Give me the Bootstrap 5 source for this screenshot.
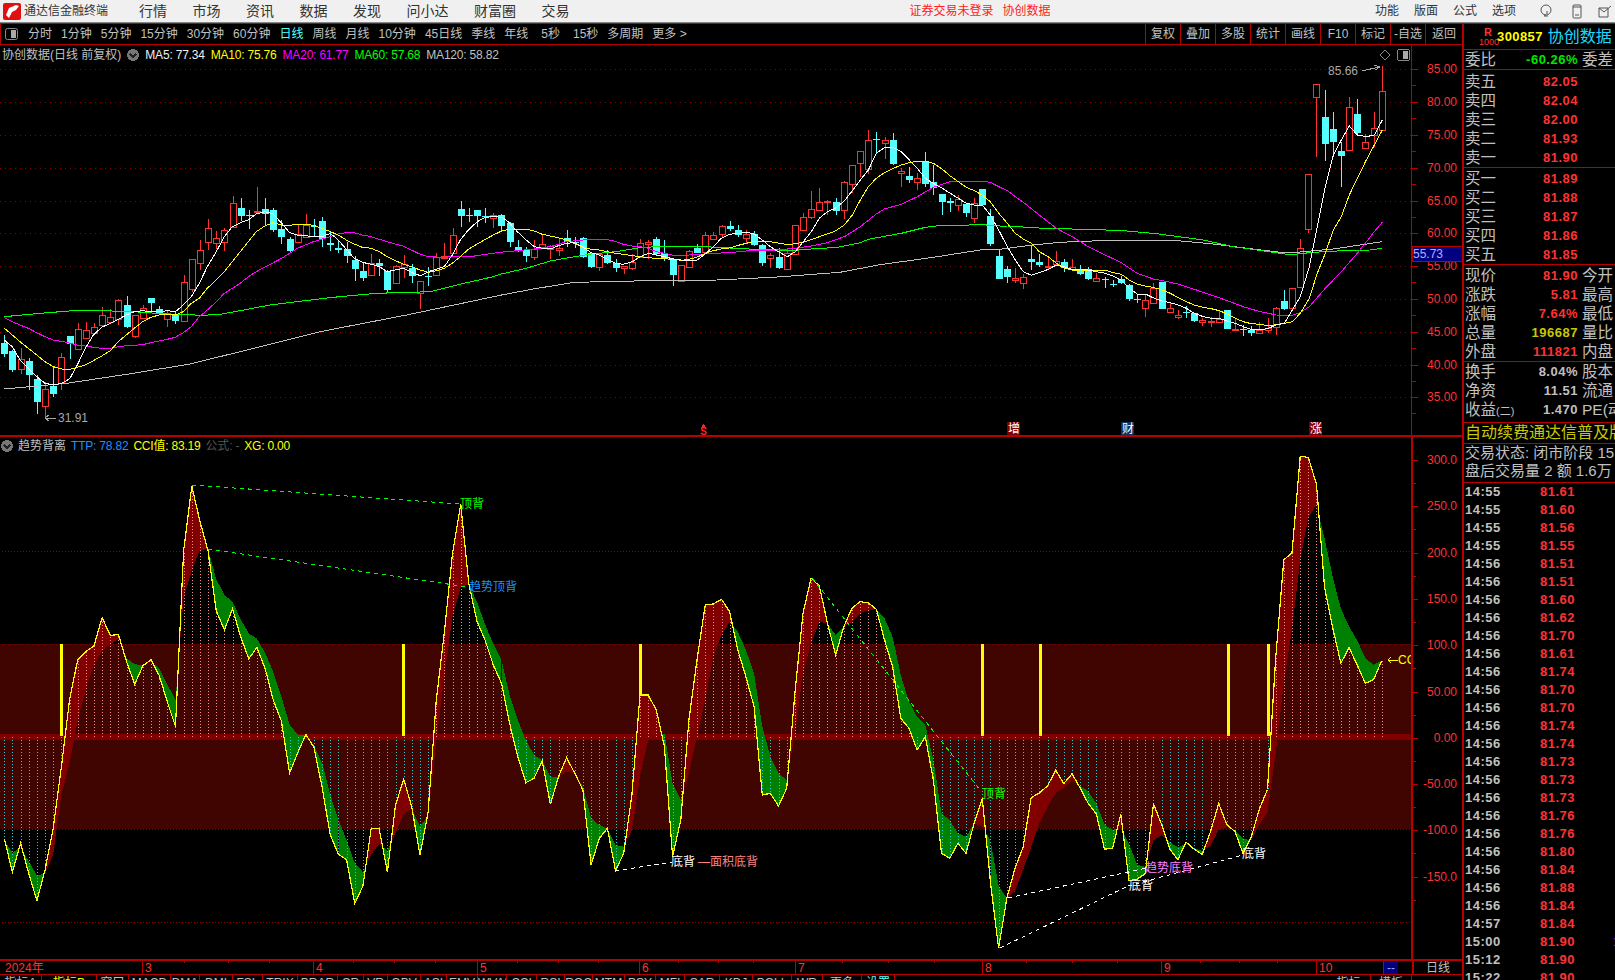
<!DOCTYPE html>
<html lang="zh-CN">
<head>
<meta charset="UTF-8">
<title>通达信金融终端</title>
<link href="https://cdn.jsdelivr.net/npm/bootstrap@5.3.0/dist/css/bootstrap.min.css" rel="stylesheet">
<style>
  html, body { height: 980px; overflow: hidden; background: #000; }
  body { font: 12px/1.2 "Liberation Sans", "Noto Sans CJK SC", sans-serif; color: #c0c0c0; }
  .title-bar { height: 23px; background: #f0f0f0; color: #333; border-bottom: 1px solid #888; }
  .title-logo { margin-left: 3px; }
  .title-name { width: 84px; margin-left: 3px; margin-right: 31px; white-space: nowrap; }
  .title-menu { font-size: 14px; gap: 25.5px; }
  .title-warn { color: #ff2020; margin-left: 340px; gap: 9px; }
  .title-right { margin-left: auto; gap: 15px; padding-right: 3px; }
  .tool-row { height: 22px; border: 1px solid #b80000; border-right: 0; gap: 9px; padding-left: 4px; }
  .tool-icon { margin-right: 1px; }
  .tool-on { color: #54ffff; }
  .tool-btn { width: 35px; height: 20px; line-height: 20px; text-align: center; border-left: 1px solid #b80000; }
  .tool-back { width: 37px; }
  .left-col { width: 1462px; }
  .pane-top, .pane-bot { position: relative; }
  .pane-top { height: 392px; border-bottom: 2px solid #b80000; }
  .pane-bot { height: 522px; }
  .pane-top svg, .pane-bot svg { display: block; shape-rendering: crispEdges; }
  .chart-head { position: absolute; left: 2px; top: 3px; right: 52px; gap: 6px; white-space: nowrap; }
  .chart-sub { left: 1px; top: 2px; gap: 5px; }
  .chart-txt { font: 12px "Liberation Sans", "Noto Sans CJK SC", sans-serif; }
  .ma-txt { letter-spacing: -.2px; }
  .c-white { color: #f0f0f0; } .c-yel { color: #ff0; } .c-mag { color: #ff00ff; } .c-grn { color: #0f0; }
  .c-blu { color: #1e90ff; } .c-dim { color: #555; } .c-gray { color: #c0c0c0; }
  .date-row { height: 16px; border-top: 2px solid #b80000; border-bottom: 1px solid #b80000; color: #ff3232; position: relative; }
  .date-cell { padding-left: 2px; border-left: 1px solid #b80000; line-height: 14px; flex: none; }
  .date-cell:first-child { border-left: 0; padding-left: 5px; }
  .date-tick { position: absolute; top: 0; width: 1px; height: 2px; background: #b80000; }
  .date-now { background: #000080; color: #a0a0ff; text-align: center; flex: none; border-left: 1px solid #b80000; }
  .date-kind { flex: none; margin-left: auto; width: 50px; text-align: center; color: #c0c0c0; border-left: 2px solid #b80000; line-height: 14px; }
  .tab-row { height: 18px; overflow: hidden; }
  .tab-cell { flex: none; text-align: center; border-right: 1px solid #b80000; line-height: 17px; white-space: nowrap; overflow: hidden; }
  .quote-col { width: 153px; height: 957px; border-left: 2px solid #b80000; overflow: hidden; font-weight: 400; }
  .q-head { height: 27px; border-top: 1px solid #b80000; border-bottom: 1px solid #b80000; padding-right: 3px; white-space: nowrap; }
  .q-rtag { width: 18px; margin-left: 15px; color: #ff3232; text-align: center; line-height: 9px; font-size: 9px; }
  .q-rtag b { display: block; font-size: 11px; line-height: 11px; }
  .q-code { color: #ff0; font-weight: 700; font-size: 13px; letter-spacing: .4px; }
  .q-name { color: #1fd8ff; font-size: 16px; margin-left: 5px; }
  .q-sec { border-bottom: 1px solid #b80000; padding-left: 1px; }
  .q-sell { padding-top: 2px; }
  .q-buy { padding-top: 1px; }
  .q-stat { padding-top: 1px; }
  .q-stat2 { padding-bottom: 3px; }
  .q-state { padding-bottom: 2px; }
  .q-line { height: 19px; line-height: 19px; white-space: nowrap; font-size: 15.5px; }
  .q-short { height: 18px; line-height: 18px; font-size: 15px; }
  .q-paren { font-size: 11px; }
  .q-lab { flex: none; width: 50px; overflow: visible; }
  .q-val { flex: none; width: 63px; text-align: right; font: 700 13px/19px "Liberation Sans", sans-serif; letter-spacing: .5px; }
  .q-ext { margin-left: 4px; flex: none; }
  .q-red { color: #ff3232; } .q-green { color: #00e600; } .q-olive { color: #c8c800; }
  .q-ad { height: 21px; line-height: 20px; color: #c8c800; font-size: 16px; white-space: nowrap; overflow: hidden; padding-left: 1px; }
  .tick-row { height: 18px; line-height: 18px; font: 700 13px/18px "Liberation Sans", sans-serif; letter-spacing: .5px; position: relative; }
  .tick-time { flex: none; width: 76px; padding-left: 1px; }
  .tick-mark { position: absolute; left: 149px; color: #b000d0; }
</style>
</head>
<body>
<div class="title-bar d-flex align-items-center">
  <svg width="18" height="17" viewBox="0 0 18 17" class="title-logo"><rect width="18" height="17" rx="2" fill="#e01010"/><path d="M13 2 6 5 3 12l3 3 3-6 4-2 3-4z" fill="#fff"/></svg>
  <span class="title-name">通达信金融终端</span>
  <div class="title-menu d-flex"><span>行情</span><span>市场</span><span>资讯</span><span>数据</span><span>发现</span><span>问小达</span><span>财富圈</span><span>交易</span></div>
  <div class="title-warn d-flex"><span>证券交易未登录</span><span>协创数据</span></div>
  <div class="title-right d-flex align-items-center">
    <span>功能</span><span>版面</span><span>公式</span><span>选项</span>
    <svg width="14" height="14" viewBox="0 0 14 14" class="ms-2" fill="none" stroke="#555"><circle cx="7" cy="6" r="5"/><path d="M5 12h4M6 10v2M8 10V7"/></svg>
    <svg width="10" height="15" viewBox="0 0 10 15" class="ms-1" fill="none" stroke="#555"><rect x="1" y="1" width="8" height="13" rx="1"/><path d="M3 11h4M1 3h8"/></svg>
    <svg width="15" height="13" viewBox="0 0 15 13" fill="none" stroke="#555"><path d="M2 3h9v9H2zM2 3l5 4 7-6"/></svg>
  </div>
</div>
<div class="d-flex">
  <div class="left-col">
    <div class="tool-row d-flex align-items-center">
      <svg class="tool-icon" width="13" height="12" viewBox="0 0 13 12"><rect x=".5" y=".5" width="12" height="11" rx="2" fill="none" stroke="#888"/><rect x="6" y="2" width="5" height="8" fill="#aaa"/></svg>
      <span>分时</span><span>1分钟</span><span>5分钟</span><span>15分钟</span><span>30分钟</span><span>60分钟</span><span class="tool-on">日线</span><span>周线</span><span>月线</span><span>10分钟</span><span>45日线</span><span>季线</span><span>年线</span><span class="ms-1">5秒</span><span class="ms-1">15秒</span><span>多周期</span><span>更多 &gt;</span>
      <div class="d-flex ms-auto"><span class="tool-btn">复权</span><span class="tool-btn">叠加</span><span class="tool-btn">多股</span><span class="tool-btn">统计</span><span class="tool-btn">画线</span><span class="tool-btn">F10</span><span class="tool-btn">标记</span><span class="tool-btn">-自选</span><span class="tool-btn tool-back">返回</span></div>
    </div>
    <div class="pane-top">
      <svg id="upper" width="1462" height="391" viewBox="0 45 1462 391"></svg>
      <div class="chart-head d-flex align-items-center">
        <span>协创数据(日线 前复权)</span>
        <svg width="12" height="12" viewBox="0 0 12 12"><circle cx="6" cy="6" r="6" fill="#777"/><path d="M3 5l3 3 3-3" fill="none" stroke="#222" stroke-width="1.5"/></svg>
        <span class="c-white ma-txt">MA5: 77.34</span><span class="c-yel ma-txt">MA10: 75.76</span><span class="c-mag ma-txt">MA20: 61.77</span><span class="c-grn ma-txt">MA60: 57.68</span><span class="c-gray ma-txt">MA120: 58.82</span>
        <svg class="ms-auto" width="12" height="12" viewBox="0 0 12 12"><path d="M6 1l5 5-5 5-5-5z" fill="none" stroke="#888"/></svg>
        <svg width="13" height="12" viewBox="0 0 13 12"><rect x=".5" y=".5" width="12" height="11" rx="2" fill="none" stroke="#888"/><rect x="6" y="2" width="5" height="8" fill="#aaa"/></svg>
      </div>
    </div>
    <div class="pane-bot">
      <svg id="lower" width="1462" height="522" viewBox="0 437 1462 522"></svg>
      <div class="chart-head chart-sub d-flex align-items-center">
        <svg width="12" height="12" viewBox="0 0 12 12"><circle cx="6" cy="6" r="6" fill="#777"/><path d="M3 5l3 3 3-3" fill="none" stroke="#222" stroke-width="1.5"/></svg>
        <span>趋势背离</span>
        <span class="c-blu ma-txt">TTP: 78.82</span><span class="c-yel ma-txt">CCI值: 83.19</span><span class="c-dim ma-txt">公式: -</span><span class="c-yel ma-txt">XG: 0.00</span>
      </div>
    </div>
    <div id="dates" class="date-row d-flex"></div>
    <div id="tabs" class="tab-row d-flex"></div>
  </div>
  <div class="quote-col">
    <div class="q-head d-flex align-items-center">
      <div class="q-rtag"><b>R</b>1000</div><span class="q-code">300857</span><span class="q-name">协创数据</span>
    </div>
    <div class="q-sec"><div class="q-line d-flex"><span class="q-lab">委比</span><span class="q-val q-green">-60.26%</span><span class="q-ext">委差</span></div></div>
    <div class="q-sec q-sell" id="sell"></div>
    <div class="q-sec q-buy" id="buy"></div>
    <div class="q-sec q-stat" id="stat"></div>
    <div class="q-sec q-stat2" id="stat2"></div>
    <div class="q-sec q-ad">自动续费通达信普及版</div>
    <div class="q-sec q-state">
      <div class="q-line q-short">交易状态: 闭市阶段 15:00</div>
      <div class="q-line q-short">盘后交易量 2 额 1.6万</div>
    </div>
    <div id="ticks"></div>
  </div>
</div>

<script>
// 位置数据都是从截图量的像素
const BX = i => Math.round(4.3 + 8.15 * i);

const candleA = [[910,942,885,950,0],[933,990,930,995,0],[956,986,925,1003,1],[964,1005,955,1050,0],[1018,1086,1005,1122,0],[1048,1097,1025,1135,1],[1037,1062,980,1070,0],[952,1030,940,1050,1],[888,912,888,957,0],[866,928,848,930,1],[871,893,845,895,1],[862,878,850,880,1],[826,856,800,858,1],[832,846,808,848,1],[781,838,778,855,1],[796,862,768,865,0],[826,887,826,893,1],[805,833,795,835,1],[775,789,775,820,0],[808,822,798,826,0],[820,836,810,860,1],[826,843,815,852,0],[725,842,705,843,1],[658,746,658,755,1],[631,670,600,690,1],[565,607,537,630,1],[595,608,572,628,1],[571,607,565,632,1],[490,560,468,562,1],[505,528,475,543,0],[524,527,510,567,0],[512,515,440,518,1],[508,523,475,555,0],[511,570,503,575,0],[568,591,540,612,0],[598,633,590,636,0],[583,605,553,607,1],[556,592,522,595,1],[558,560,538,590,0],[544,597,532,622,0],[609,614,575,633,0],[624,629,600,640,0],[628,648,605,668,0],[660,686,648,722,0],[694,713,667,724,0],[670,704,643,706,1],[670,678,658,708,0],[694,750,690,760,0],[677,730,675,732,1],[672,680,645,713,1],[683,707,673,728,0],[722,760,722,806,1],[707,710,680,737,0],[652,706,640,708,1],[647,655,610,657,1],[584,638,564,640,1],[507,527,484,560,0],[524,527,505,545,0],[510,527,510,562,0],[529,532,505,550,0],[524,534,520,565,1]];
const candleB = [[346,378,343,392,0],[369,427,367,440,0],[442,452,420,455,0],[450,468,442,486,0],[447,470,420,480,1],[431,445,402,447,1],[437,448,435,477,1],[444,449,413,468,1],[415,425,390,440,0],[425,427,410,443,0],[414,470,410,473,0],[460,501,458,503,0],[463,502,460,513,1],[465,489,450,491,0],[489,503,478,516,0],[498,503,498,522,1],[485,503,463,510,1],[430,471,418,473,1],[427,431,420,476,1],[417,463,412,467,0],[460,473,420,483,0],[478,525,476,558,0],[496,542,496,544,1],[454,500,450,502,1],[444,459,432,460,0],[405,456,396,458,1],[406,418,395,420,1],[379,401,375,411,1],[378,387,363,393,0],[390,404,375,410,0],[401,413,390,433,1],[402,435,393,437,0],[435,489,433,497,0],[466,475,460,503,1],[471,504,445,507,0],[460,508,445,510,1],[376,461,376,463,1],[352,389,340,390,1],[328,350,273,357,1],[307,330,265,332,1],[302,307,300,345,1],[307,333,293,345,0],[247,329,243,356,1],[196,252,195,278,1],[154,188,154,230,1],[121,206,90,222,1],[117,119,96,163,0],[121,128,110,177,1],[120,192,100,195,0],[214,220,205,260,1],[228,240,202,248,0],[235,245,220,270,1],[184,252,156,260,0],[246,263,195,285,0],[282,306,282,345,0],[304,308,295,335,0],[298,315,285,332,1],[312,339,310,351,0],[308,353,295,368,1],[267,315,267,318,0],[348,432,328,438,0],[468,537,450,537,0]];
const candleC = [[687,710,678,728,0],[715,719,685,728,1],[712,728,702,747,1],[657,665,615,690,0],[667,675,643,680,0],[677,680,647,688,1],[664,671,633,674,1],[667,685,657,695,0],[681,686,657,688,1],[692,702,676,705,0],[688,717,682,720,0],[715,722,698,724,1],[717,721,710,744,0],[733,735,720,740,0],[718,730,708,733,0],[736,778,732,782,0],[776,779,762,790,0],[781,803,765,831,1],[744,789,730,792,1],[726,806,725,808,0],[805,815,790,816,1],[824,830,810,837,1],[816,818,798,833,0],[820,842,818,845,0],[841,846,835,858,1],[842,844,830,860,1],[838,845,812,848,1],[811,866,810,868,0],[867,868,835,870,1],[867,869,855,888,0],[870,878,858,888,0],[870,878,847,880,1],[865,869,835,878,1],[803,862,800,885,1],[783,807,750,810,0],[745,805,745,808,1],[625,740,597,742,1],[403,566,403,580,1],[133,172,133,350,1],[231,311,150,362,0],[267,305,216,352,0],[334,347,305,440,0],[200,331,172,333,1],[223,278,178,281,0],[305,325,282,327,1],[265,285,216,320,1],[152,271,78,273,1]];
const toY = (arr, base) => arr.map(c => [base + c[0] / 3, base + c[1] / 3, base + c[2] / 3, base + c[3] / 3, c[4]]);
const candles = [...toY(candleA, 40), ...toY(candleB, 100), ...toY(candleC, 40)];

const pts = (flat, ox, oy) => { let s = []; for (let i = 0; i < flat.length; i += 2) s.push((ox + flat[i] / 3).toFixed(1) + ',' + (oy + flat[i + 1] / 3).toFixed(1)); return s.join(' '); };
const maLine = (a, b, c) => pts(a, 0, 40) + ' ' + pts(b, 500, 100) + ' ' + pts(c, 1000, 40);

const ma5 = maLine([13,900,37,920,60,960,85,985,110,1010,135,1030,160,1035,190,1028,210,1015,232,975,256,925,280,885,305,862,331,850,355,838,379,825,403,815,428,812,452,815,478,815,502,812,526,815,550,795,574,770,598,730,622,680,649,635,673,590,697,560,721,548,745,540,769,522,796,515,820,522,845,550,869,578,892,585,916,587,940,590,967,590,991,580,1015,600,1039,628,1063,655,1087,667,1114,673,1138,680,1162,695,1186,690,1210,685,1234,697,1261,707,1285,695,1309,688,1333,680,1357,645,1381,600,1405,570,1432,545,1456,532,1480,530],
  [7,352,28,368,52,395,79,420,103,440,127,445,151,447,175,437,199,430,223,428,250,442,274,458,298,465,322,478,346,490,370,493,397,485,421,470,445,460,469,465,493,470,517,476,544,480,568,483,592,480,616,462,640,440,664,415,688,403,715,400,739,397,763,402,787,420,811,440,835,455,862,470,886,455,910,425,934,395,958,355,982,335,1006,325,1033,303,1057,272,1081,240,1105,210,1129,160,1153,143,1180,143,1204,155,1228,180,1252,205,1276,235,1300,250,1327,265,1351,280,1375,295,1399,310,1423,315,1447,315,1471,345,1495,388],
  [22,620,46,660,70,695,94,706,118,698,145,688,169,675,193,680,217,688,241,688,265,690,289,695,316,700,340,708,364,720,388,745,412,762,436,762,463,775,487,783,511,788,535,795,559,805,583,820,610,830,634,835,658,835,682,843,706,850,730,860,754,868,781,870,805,865,829,855,853,850,877,810,901,770,928,680,952,560,976,440,1000,345,1024,300,1048,258,1072,285,1099,290,1123,285,1147,240]);
const ma10 = maLine([13,865,37,885,60,905,85,925,110,945,135,965,160,980,190,988,210,988,232,982,256,975,280,962,305,948,331,932,355,905,379,885,403,865,428,845,452,832,478,825,502,823,526,825,550,815,574,790,598,775,622,745,649,720,673,695,697,665,721,635,745,605,769,575,796,557,820,548,845,555,869,556,892,553,916,553,940,556,967,565,991,575,1015,585,1039,600,1063,612,1087,622,1114,625,1138,635,1162,650,1186,662,1210,672,1234,680,1261,690,1285,697,1309,692,1333,685,1357,670,1381,650,1405,628,1432,612,1456,598,1480,585],
  [7,392,28,388,52,388,79,388,103,393,127,403,151,408,175,413,199,420,223,430,250,443,274,448,298,450,322,455,346,460,370,463,397,467,421,470,445,473,469,475,493,476,517,478,544,481,568,478,592,471,616,460,640,452,664,447,688,444,715,436,739,430,763,424,787,424,811,425,835,429,862,434,886,431,910,427,934,419,958,410,982,402,1006,393,1033,375,1057,345,1081,300,1105,260,1129,235,1153,218,1180,205,1204,195,1228,188,1252,183,1276,183,1300,190,1327,208,1351,228,1375,245,1399,262,1423,272,1447,285,1471,305,1495,338],
  [22,550,46,580,70,597,94,610,118,635,145,650,169,670,193,685,217,690,241,690,265,691,289,691,316,691,340,698,364,703,388,720,412,733,436,738,463,743,487,750,511,760,535,773,559,785,583,795,610,802,634,806,658,812,682,822,706,835,730,845,754,851,781,853,805,858,829,854,853,850,877,845,901,820,928,775,952,700,976,640,1000,570,1024,530,1048,465,1072,415,1099,360,1123,315,1147,270]);
const ma20 = maLine([13,833,37,845,60,855,85,865,110,878,135,890,160,900,190,905,210,910,232,915,256,918,280,922,305,925,331,925,355,920,379,917,403,916,428,914,452,908,478,903,502,898,526,892,550,878,574,860,598,830,622,810,649,785,673,760,697,745,721,730,745,710,769,695,796,680,820,668,845,655,869,640,892,625,916,615,940,605,967,597,991,590,1015,582,1039,578,1063,578,1087,585,1114,590,1138,598,1162,605,1186,612,1210,618,1234,630,1261,643,1285,650,1309,651,1333,652,1357,650,1381,650,1405,650,1432,647,1456,643,1480,640],
  [0,457,52,452,103,447,151,440,199,425,250,420,322,419,346,424,370,433,397,438,421,440,445,445,469,455,493,460,517,465,544,468,568,465,592,464,640,460,688,458,739,453,787,451,835,450,886,445,934,438,982,428,1033,410,1081,380,1129,342,1153,327,1204,313,1252,290,1300,262,1351,245,1399,244,1447,244,1471,247,1500,262],
  [22,452,46,470,70,487,118,525,169,565,217,590,265,620,316,645,364,668,412,700,460,717,487,722,535,732,583,748,634,765,682,782,730,800,781,815,829,825,877,826,901,818,928,800,976,745,1024,695,1072,640,1123,575,1147,547]);
const ma60 = maLine([13,830,120,820,220,812,305,812,400,815,500,822,610,826,660,823,720,812,810,795,900,784,1000,772,1130,760,1290,755,1400,728,1480,710],
  [0,523,79,505,151,483,223,470,274,462,346,455,421,443,469,440,616,440,688,444,787,449,886,451,958,445,1006,443,1081,428,1105,418,1204,400,1276,382,1315,377,1447,374,1500,378],
  [22,558,130,565,300,569,380,573,470,581,610,600,700,620,770,630,870,644,940,637,1030,632,1110,630,1147,625]);
const ma120 = maLine([13,1047,200,1030,400,1000,570,972,720,935,960,875,1220,825,1480,770],
  [0,586,100,567,210,549,310,544,500,542,650,540,820,532,1020,517,1140,494,1300,472,1440,450,1500,448],
  [22,625,100,615,180,607,330,601,520,601,640,612,760,627,840,637,890,637,1000,627,1100,612,1147,605]);

const RED = '#ff3232', AXIS = '#b80000', TXT = 'class="chart-txt"';
let up = '';
// 网格和坐标
const prices = ['85.00','80.00','75.00','70.00','65.00','60.00','55.00','50.00','45.00','40.00','35.00'];
prices.forEach((p, k) => {
  const y = Math.round(69.3 + 32.8 * k);
  up += `<line x1="0" x2="1411" y1="${y}.5" y2="${y}.5" stroke="#900000" stroke-dasharray="1 4"/>`;
  up += `<line x1="1412" x2="1418" y1="${y}.5" y2="${y}.5" stroke="${AXIS}"/>`;
  up += `<line x1="1412" x2="1416" y1="${y + 16}.5" y2="${y + 16}.5" stroke="${AXIS}"/>`;
  up += `<text ${TXT} x="1457" y="${y + 4}" text-anchor="end" fill="${RED}">${p}</text>`;
});
up += `<line x1="1411.5" x2="1411.5" y1="45" y2="436" stroke="${AXIS}"/>`;
// K线
candles.forEach((c, i) => {
  const x = BX(i), col = c[4] ? RED : '#54ffff';
  const t = Math.round(c[0]), b = Math.round(c[1]);
  up += `<line x1="${x}.5" x2="${x}.5" y1="${Math.round(c[2])}" y2="${Math.round(c[3])}" stroke="${col}"/>`;
  if (c[4]) up += `<rect x="${x - 3}.5" y="${t}.5" width="6" height="${Math.max(b - t, 1)}" fill="#000" stroke="${col}"/>`;
  else up += `<rect x="${x - 3}" y="${t}" width="7" height="${Math.max(b - t, 1)}" fill="${col}"/>`;
});
[[ma120, '#c0c0c0'], [ma60, '#00ff00'], [ma20, '#ff00ff'], [ma10, '#ffff00'], [ma5, '#ffffff']].forEach(m => {
  up += `<polyline points="${m[0]}" fill="none" stroke="${m[1]}"/>`;
});
// 价格标注和事件标记
up += `<text ${TXT} x="1328" y="75" fill="#a8a8a8">85.66</text><path d="M1362 71l17-4m-5-2 6 2-5 3" fill="none" stroke="#a8a8a8"/>`;
up += `<text ${TXT} x="58" y="422" fill="#a8a8a8">31.91</text><path d="M56 418H45m4-3-4 3 4 3" fill="none" stroke="#a8a8a8"/>`;
up += `<path d="M703.5 424l-3 4h6z" fill="#ff2020"/><text x="703.5" y="435" text-anchor="middle" font-family="Liberation Sans" font-weight="700" font-size="10" fill="#ff2020">S</text>`;
[[1014, '#800000', '增'], [1128, '#103060', '财'], [1316, '#800000', '涨']].forEach(m => {
  up += `<rect x="${m[0] - 7}" y="422" width="13" height="13" fill="${m[1]}"/><text ${TXT} x="${m[0]}" y="433" text-anchor="middle" fill="#fff">${m[2]}</text>`;
});
up += `<rect x="1412" y="246" width="50" height="15" fill="#000080" stroke="${AXIS}"/><text ${TXT} x="1413" y="258" fill="#b0b0ff">55.73</text>`;
document.getElementById('upper').innerHTML = up;

// 副图: [CCI, TTP] 每根K线一对
const subA = [[1165,1170],[1260,1205],[1178,1190],[1265,1230],[1342,1270],[1255,1265],[1135,1210],[960,1040],[770,950],[655,830],[632,740],[615,670],[535,630],[586,610],[583,595],[660,650],[725,668],[672,670],[655,660],[700,680],[775,725],[845,770],[345,480],[160,400],[260,342],[345,340],[515,425],[570,470],[510,490],[590,540],[652,580],[620,595],[680,635],[770,690],[830,760],[978,840],[920,868],[868,868],[905,900],[1020,950],[1155,1040],[1210,1110],[1225,1170],[1350,1235],[1300,1260],[1137,1210],[1137,1180],[1260,1200],[1070,1150],[995,1095],[1075,1080],[1212,1130],[1090,1100],[770,890],[575,700],[350,530],[212,450],[440,440],[545,490],[600,555],[670,610]];
const subB = [[370,300],[490,405],[590,480],[668,540],[655,585],[603,600],[733,650],[650,650],[593,635],[640,640],[690,680],[915,775],[835,795],[805,805],[932,855],[880,860],[705,810],[405,650],[405,540],[450,530],[560,520],[890,670],[780,720],[480,640],[300,530],[135,420],[132,290],[118,225],[155,185],[270,215],[350,270],[440,340],[705,500],[700,590],[738,640],[685,660],[400,520],[160,340],[55,250],[78,185],[190,190],[285,225],[200,200],[145,185],[125,160],[128,150],[148,148],[240,175],[320,230],[475,345],[505,425],[570,470],[530,495],[660,600],[880,760],[895,780],[850,820],[880,830],[790,790]];
const subC = [[1050,1130],[1290,1170],[1478,1300],[1335,1335],[1250,1315],[1190,1255],[1048,1190],[1035,1120],[1015,1075],[970,1035],[1008,1020],[980,1000],[1020,1015],[1065,1030],[1095,1065],[1195,1125],[1192,1140],[1095,1135],[1285,1180],[1280,1240],[1265,1245],[1065,1170],[1125,1155],[1195,1175],[1225,1190],[1175,1180],[1195,1192],[1210,1200],[1145,1185],[1065,1140],[1125,1132],[1145,1140],[1208,1165],[1160,1170],[1080,1125],[1025,1090],[650,920],[370,720],[350,570],[75,370],[78,250],[155,215],[450,310],[565,420],[665,510],[620,560],[670,600],[722,650],[712,670],[658,658]];
const Kz = 550 / 1568;
const sub = [...subA.map(v => [430 + v[0] * Kz, 430 + v[1] * Kz]), ...subB.map(v => [560 + v[0] / 3, 560 + v[1] / 3]), ...subC.map(v => [430 + v[0] * Kz, 430 + v[1] * Kz])];

let lo = '';
const ZERO = 737;
lo += `<rect x="0" y="644" width="1411" height="185" fill="#400500"/><rect x="0" y="734" width="1411" height="6" fill="#800000"/>`;
[551, 644, 829, 922].forEach(y => { lo += `<line x1="2" x2="1411" y1="${y}.5" y2="${y}.5" stroke="#900000" stroke-dasharray="1 2"/>`; });
[61, 403, 640, 982, 1040, 1228, 1268].forEach(x => { lo += `<rect x="${x - 1}" y="644" width="3" height="92" fill="#ffff00"/>`; });
for (let i = 0; i < sub.length - 1; i++) {
  const x0 = 4.3 + 8.15 * i, x1 = x0 + 8.15, [c0, t0] = sub[i], [c1, t1] = sub[i + 1];
  const d0 = t0 - c0, d1 = t1 - c1;
  const poly = (p, col) => { lo += `<polygon points="${p.map(q => q[0].toFixed(1) + ',' + q[1].toFixed(1)).join(' ')}" fill="${col}"/>`; };
  if (d0 * d1 < 0) {
    const r = d0 / (d0 - d1), xm = x0 + r * 8.15, ym = c0 + r * (c1 - c0);
    poly([[x0, c0], [xm, ym], [x0, t0]], d0 > 0 ? '#800000' : '#008000');
    poly([[xm, ym], [x1, c1], [x1, t1]], d1 > 0 ? '#800000' : '#008000');
  } else {
    poly([[x0, c0], [x1, c1], [x1, t1], [x0, t0]], d0 + d1 > 0 ? '#800000' : '#008000');
  }
}
sub.forEach((v, i) => {
  const x = BX(i), above = v[0] < ZERO;
  lo += `<line x1="${x}.5" x2="${x}.5" y1="${ZERO}" y2="${Math.round(v[0])}" stroke="${above ? '#ff8c8c' : '#20d0d0'}" stroke-dasharray="1 2"/>`;
});
lo += `<polyline points="${sub.map((v, i) => (4.3 + 8.15 * i).toFixed(1) + ',' + v[0].toFixed(1)).join(' ')}" fill="none" stroke="#ffff00" stroke-width="1.2"/>`;
// 背离虚线和文字
[[192,485,460,504,'#00ff00'],[208,549,468,587,'#00ff00'],[812,578,980,790,'#00ff00'],[615,871,672,862,'#fff'],[1008,898,1147,868,'#fff'],[1000,948,1128,886,'#fff'],[1128,886,1243,855,'#fff']].forEach(l => {
  lo += `<line x1="${l[0]}" y1="${l[1]}" x2="${l[2]}" y2="${l[3]}" stroke="${l[4]}" stroke-dasharray="4 4"/>`;
});
[[460,508,'顶背','#00ff00'],[469,591,'趋势顶背','#1e90ff'],[671,866,'底背','#fff'],[698,866,'—面积底背','#ff8080'],[982,798,'顶背','#00ff00'],[1129,890,'底背','#fff'],[1145,872,'趋势底背','#ff80ff'],[1242,858,'底背','#fff']].forEach(t => {
  lo += `<text ${TXT} x="${t[0]}" y="${t[1]}" fill="${t[3]}">${t[2]}</text>`;
});
lo += `<path d="M1398 660h-10m3-3-3 3 3 3" fill="none" stroke="#ffff00"/>`;
lo += `<text ${TXT} x="1398" y="664" fill="#ffff00" clip-path="url(#ccclip)">CC</text><clipPath id="ccclip"><rect x="1390" y="650" width="21" height="20"/></clipPath>`;
['300.0','250.0','200.0','150.0','100.0','50.00','0.00','-50.00','-100.0','-150.0'].forEach((p, k) => {
  const y = Math.round(460 + 46.3 * k);
  lo += `<line x1="1412" x2="1418" y1="${y}.5" y2="${y}.5" stroke="${AXIS}"/><line x1="1412" x2="1416" y1="${y + 23}.5" y2="${y + 23}.5" stroke="${AXIS}"/>`;
  lo += `<text ${TXT} x="1457" y="${y + 4}" text-anchor="end" fill="${RED}">${p}</text>`;
});
lo += `<rect x="1411" y="437" width="2" height="522" fill="${AXIS}"/>`;
document.getElementById('lower').innerHTML = lo;

// 日期栏: 宽度由分隔线位置算出
const dates = [['2024年', 0], ['3', 142], ['4', 313], ['5', 477], ['6', 639], ['7', 795], ['8', 982], ['9', 1161], ['10', 1316]];
let dh = '';
dates.forEach((d, i) => {
  const next = i + 1 < dates.length ? dates[i + 1][1] : 1383;
  dh += `<div class="date-cell" style="width:${next - d[1]}px">${d[0]}</div>`;
});
dh += `<div class="date-now" style="width:15px">--</div><div class="date-kind">日线</div>`;
[184,228,269,353,394,435,517,558,598,678,718,753,842,888,934,1026,1072,1117,1200,1239,1277].forEach(x => { dh += `<i class="date-tick" style="left:${x}px"></i>`; });
document.getElementById('dates').innerHTML = dh;

const tabs = ['指标A','指标B','窗口','MACD','DMA','DMI','FSL','TRIX','BRAR','CR','VR','OBV','ASI','EMV','WVAD','CCI','RSI','ROC','MTM','PSY','MFI','SAR','KDJ','BOLL','WR','更多','设置'];
const tabX = [0,42,97,129,171,200,233,263,298,338,364,388,421,447,478,507,537,565,593,625,656,685,720,753,792,823,862,895];
let th = '';
tabs.forEach((t, i) => {
  const col = t === '指标B' ? 'color:#ff0;' : t === '设置' ? 'color:#54ffff;' : '';
  th += `<div class="tab-cell" style="${col}width:${tabX[i + 1] - tabX[i]}px">${t}</div>`;
});
th += `<div class="tab-cell ms-auto" style="width:44px">指标</div><div class="tab-cell" style="width:41px">模板</div><div style="width:50px"></div>`;
document.getElementById('tabs').innerHTML = th;

// 右侧盘口
const rowHtml = (a, b, cls, ext) => `<div class="q-line d-flex"><span class="q-lab">${a}</span><span class="q-val ${cls}">${b}</span>${ext ? `<span class="q-ext">${ext}</span>` : ''}</div>`;
document.getElementById('sell').innerHTML = [['卖五','82.05'],['卖四','82.04'],['卖三','82.00'],['卖二','81.93'],['卖一','81.90']].map(r => rowHtml(r[0], r[1], 'q-red')).join('');
document.getElementById('buy').innerHTML = [['买一','81.89'],['买二','81.88'],['买三','81.87'],['买四','81.86'],['买五','81.85']].map(r => rowHtml(r[0], r[1], 'q-red')).join('');
document.getElementById('stat').innerHTML = [['现价','81.90','q-red','今开'],['涨跌','5.81','q-red','最高'],['涨幅','7.64%','q-red','最低'],['总量','196687','q-olive','量比'],['外盘','111821','q-red','内盘']].map(r => rowHtml(r[0], r[1], r[2], r[3])).join('');
document.getElementById('stat2').innerHTML = [['换手','8.04%','','股本'],['净资','11.51','','流通'],['收益<span class="q-paren">(二)</span>','1.470','','PE(动']].map(r => rowHtml(r[0], r[1], r[2], r[3])).join('');
const ticks = [['14:55','81.61'],['14:55','81.60'],['14:55','81.56'],['14:55','81.55'],['14:56','81.51'],['14:56','81.51'],['14:56','81.60'],['14:56','81.62'],['14:56','81.70'],['14:56','81.61'],['14:56','81.74'],['14:56','81.70'],['14:56','81.70'],['14:56','81.74'],['14:56','81.74'],['14:56','81.73'],['14:56','81.73'],['14:56','81.73'],['14:56','81.76'],['14:56','81.76'],['14:56','81.80'],['14:56','81.84'],['14:56','81.88'],['14:56','81.84'],['14:57','81.84'],['15:00','81.90'],['15:12','81.90'],['15:22','81.90']];
document.getElementById('ticks').innerHTML = ticks.map(t => `<div class="tick-row d-flex"><span class="tick-time">${t[0]}</span><span class="q-red">${t[1]}</span>${t[0] === '15:00' ? '<span class="tick-mark">1</span>' : ''}</div>`).join('');
</script>
<script src="https://cdn.jsdelivr.net/npm/bootstrap@5.3.0/dist/js/bootstrap.bundle.min.js"></script>
</body>
</html>
